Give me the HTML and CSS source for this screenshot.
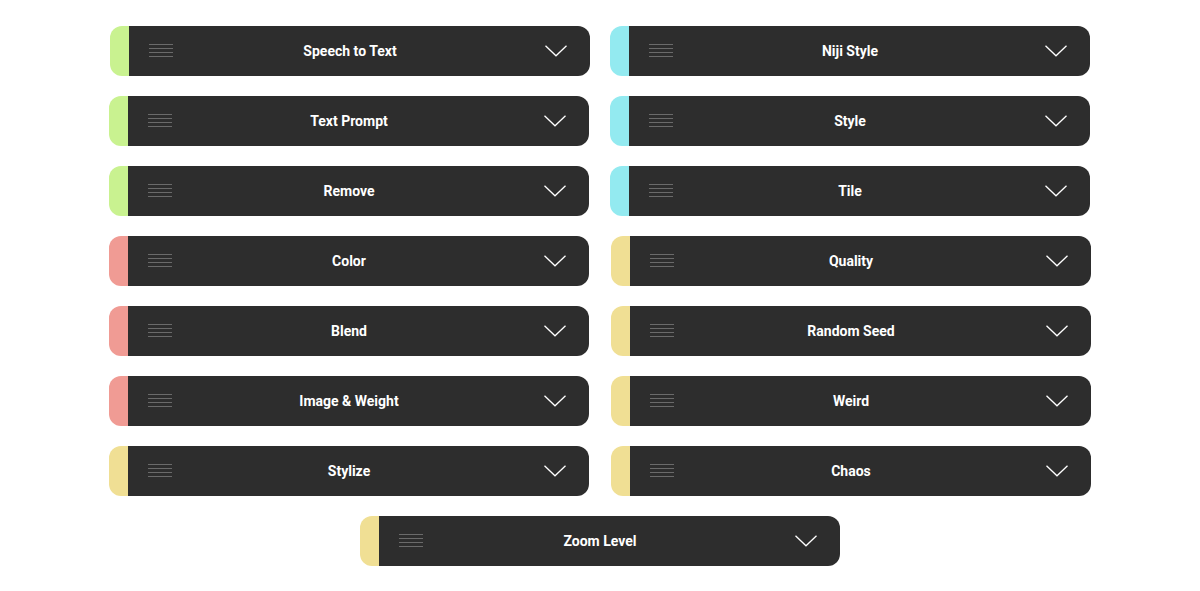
FILE: index.html
```html
<!DOCTYPE html>
<html>
<head>
<meta charset="utf-8">
<link rel="stylesheet" href="styles.css">
</head>
<body>
<div class="grid">
  <div class="card"><span class="strip green"></span><div class="bar"><div class="lead"><span class="lines"><i></i><i></i><i></i><i></i></span></div><div class="title">Speech to Text</div><div class="tail"><svg width="22" height="12" viewBox="0 0 22 12"><polyline points="0.5,0.8 11,10.8 21.5,0.8" fill="none" stroke="#fff" stroke-width="1.3"/></svg></div></div></div>
  <div class="card"><span class="strip cyan"></span><div class="bar"><div class="lead"><span class="lines"><i></i><i></i><i></i><i></i></span></div><div class="title">Niji Style</div><div class="tail"><svg width="22" height="12" viewBox="0 0 22 12"><polyline points="0.5,0.8 11,10.8 21.5,0.8" fill="none" stroke="#fff" stroke-width="1.3"/></svg></div></div></div>

  <div class="card left-shift"><span class="strip green"></span><div class="bar"><div class="lead"><span class="lines"><i></i><i></i><i></i><i></i></span></div><div class="title">Text Prompt</div><div class="tail"><svg width="22" height="12" viewBox="0 0 22 12"><polyline points="0.5,0.8 11,10.8 21.5,0.8" fill="none" stroke="#fff" stroke-width="1.3"/></svg></div></div></div>
  <div class="card"><span class="strip cyan"></span><div class="bar"><div class="lead"><span class="lines"><i></i><i></i><i></i><i></i></span></div><div class="title">Style</div><div class="tail"><svg width="22" height="12" viewBox="0 0 22 12"><polyline points="0.5,0.8 11,10.8 21.5,0.8" fill="none" stroke="#fff" stroke-width="1.3"/></svg></div></div></div>

  <div class="card left-shift"><span class="strip green"></span><div class="bar"><div class="lead"><span class="lines"><i></i><i></i><i></i><i></i></span></div><div class="title">Remove</div><div class="tail"><svg width="22" height="12" viewBox="0 0 22 12"><polyline points="0.5,0.8 11,10.8 21.5,0.8" fill="none" stroke="#fff" stroke-width="1.3"/></svg></div></div></div>
  <div class="card"><span class="strip cyan"></span><div class="bar"><div class="lead"><span class="lines"><i></i><i></i><i></i><i></i></span></div><div class="title">Tile</div><div class="tail"><svg width="22" height="12" viewBox="0 0 22 12"><polyline points="0.5,0.8 11,10.8 21.5,0.8" fill="none" stroke="#fff" stroke-width="1.3"/></svg></div></div></div>

  <div class="card left-shift"><span class="strip red"></span><div class="bar"><div class="lead"><span class="lines"><i></i><i></i><i></i><i></i></span></div><div class="title">Color</div><div class="tail"><svg width="22" height="12" viewBox="0 0 22 12"><polyline points="0.5,0.8 11,10.8 21.5,0.8" fill="none" stroke="#fff" stroke-width="1.3"/></svg></div></div></div>
  <div class="card right-shift"><span class="strip yellow"></span><div class="bar"><div class="lead"><span class="lines"><i></i><i></i><i></i><i></i></span></div><div class="title">Quality</div><div class="tail"><svg width="22" height="12" viewBox="0 0 22 12"><polyline points="0.5,0.8 11,10.8 21.5,0.8" fill="none" stroke="#fff" stroke-width="1.3"/></svg></div></div></div>

  <div class="card left-shift"><span class="strip red"></span><div class="bar"><div class="lead"><span class="lines"><i></i><i></i><i></i><i></i></span></div><div class="title">Blend</div><div class="tail"><svg width="22" height="12" viewBox="0 0 22 12"><polyline points="0.5,0.8 11,10.8 21.5,0.8" fill="none" stroke="#fff" stroke-width="1.3"/></svg></div></div></div>
  <div class="card right-shift"><span class="strip yellow"></span><div class="bar"><div class="lead"><span class="lines"><i></i><i></i><i></i><i></i></span></div><div class="title">Random Seed</div><div class="tail"><svg width="22" height="12" viewBox="0 0 22 12"><polyline points="0.5,0.8 11,10.8 21.5,0.8" fill="none" stroke="#fff" stroke-width="1.3"/></svg></div></div></div>

  <div class="card left-shift"><span class="strip red"></span><div class="bar"><div class="lead"><span class="lines"><i></i><i></i><i></i><i></i></span></div><div class="title">Image &amp; Weight</div><div class="tail"><svg width="22" height="12" viewBox="0 0 22 12"><polyline points="0.5,0.8 11,10.8 21.5,0.8" fill="none" stroke="#fff" stroke-width="1.3"/></svg></div></div></div>
  <div class="card right-shift"><span class="strip yellow"></span><div class="bar"><div class="lead"><span class="lines"><i></i><i></i><i></i><i></i></span></div><div class="title">Weird</div><div class="tail"><svg width="22" height="12" viewBox="0 0 22 12"><polyline points="0.5,0.8 11,10.8 21.5,0.8" fill="none" stroke="#fff" stroke-width="1.3"/></svg></div></div></div>

  <div class="card left-shift"><span class="strip yellow"></span><div class="bar"><div class="lead"><span class="lines"><i></i><i></i><i></i><i></i></span></div><div class="title">Stylize</div><div class="tail"><svg width="22" height="12" viewBox="0 0 22 12"><polyline points="0.5,0.8 11,10.8 21.5,0.8" fill="none" stroke="#fff" stroke-width="1.3"/></svg></div></div></div>
  <div class="card right-shift"><span class="strip yellow"></span><div class="bar"><div class="lead"><span class="lines"><i></i><i></i><i></i><i></i></span></div><div class="title">Chaos</div><div class="tail"><svg width="22" height="12" viewBox="0 0 22 12"><polyline points="0.5,0.8 11,10.8 21.5,0.8" fill="none" stroke="#fff" stroke-width="1.3"/></svg></div></div></div>

  <div class="card wide"><span class="strip yellow"></span><div class="bar"><div class="lead"><span class="lines"><i></i><i></i><i></i><i></i></span></div><div class="title">Zoom Level</div><div class="tail"><svg width="22" height="12" viewBox="0 0 22 12"><polyline points="0.5,0.8 11,10.8 21.5,0.8" fill="none" stroke="#fff" stroke-width="1.3"/></svg></div></div></div>
</div>
</body>
</html>
```

FILE: styles.css
```css
html, body {
  margin: 0;
  padding: 0;
  background: #ffffff;
}
body {
  font-family: Roboto, "Liberation Sans", Arial, sans-serif;
}
.grid {
  display: grid;
  grid-template-columns: 480px 480px;
  column-gap: 20px;
  row-gap: 20px;
  justify-content: center;
  padding-top: 26px;
}
.card {
  height: 50px;
  display: flex;
}
.left-shift { margin-left: -1px; margin-right: 1px; }
.right-shift { margin-left: 1px; margin-right: -1px; }
.wide {
  grid-column: 1 / span 2;
  width: 480px;
  justify-self: center;
}
.strip {
  width: 19px;
  flex: none;
  border-radius: 12px 0 0 12px;
}
.green { background: #c9f290; }
.cyan { background: #93eaf0; }
.red { background: #f09b94; }
.yellow { background: #f0df94; }
.bar {
  flex: 1;
  display: flex;
  align-items: center;
  background: #2d2d2d;
  border-radius: 0 12px 12px 0;
}
.lead {
  width: 61px;
  flex: none;
  display: flex;
  align-items: center;
}
.lines {
  margin-left: 20px;
  width: 24px;
  display: flex;
  flex-direction: column;
  gap: 3px;
  margin-top: -1px;
}
.lines i {
  display: block;
  height: 1px;
  background: #6a6a6a;
}
.title {
  flex: 1;
  text-align: center;
  color: #ffffff;
  font-weight: 700;
  font-size: 14px;
  line-height: 16px;
}
.tail {
  width: 80px;
  flex: none;
  display: flex;
  justify-content: flex-end;
  align-items: center;
  padding-right: 23px;
  box-sizing: border-box;
}
.tail svg { display: block; }
```
